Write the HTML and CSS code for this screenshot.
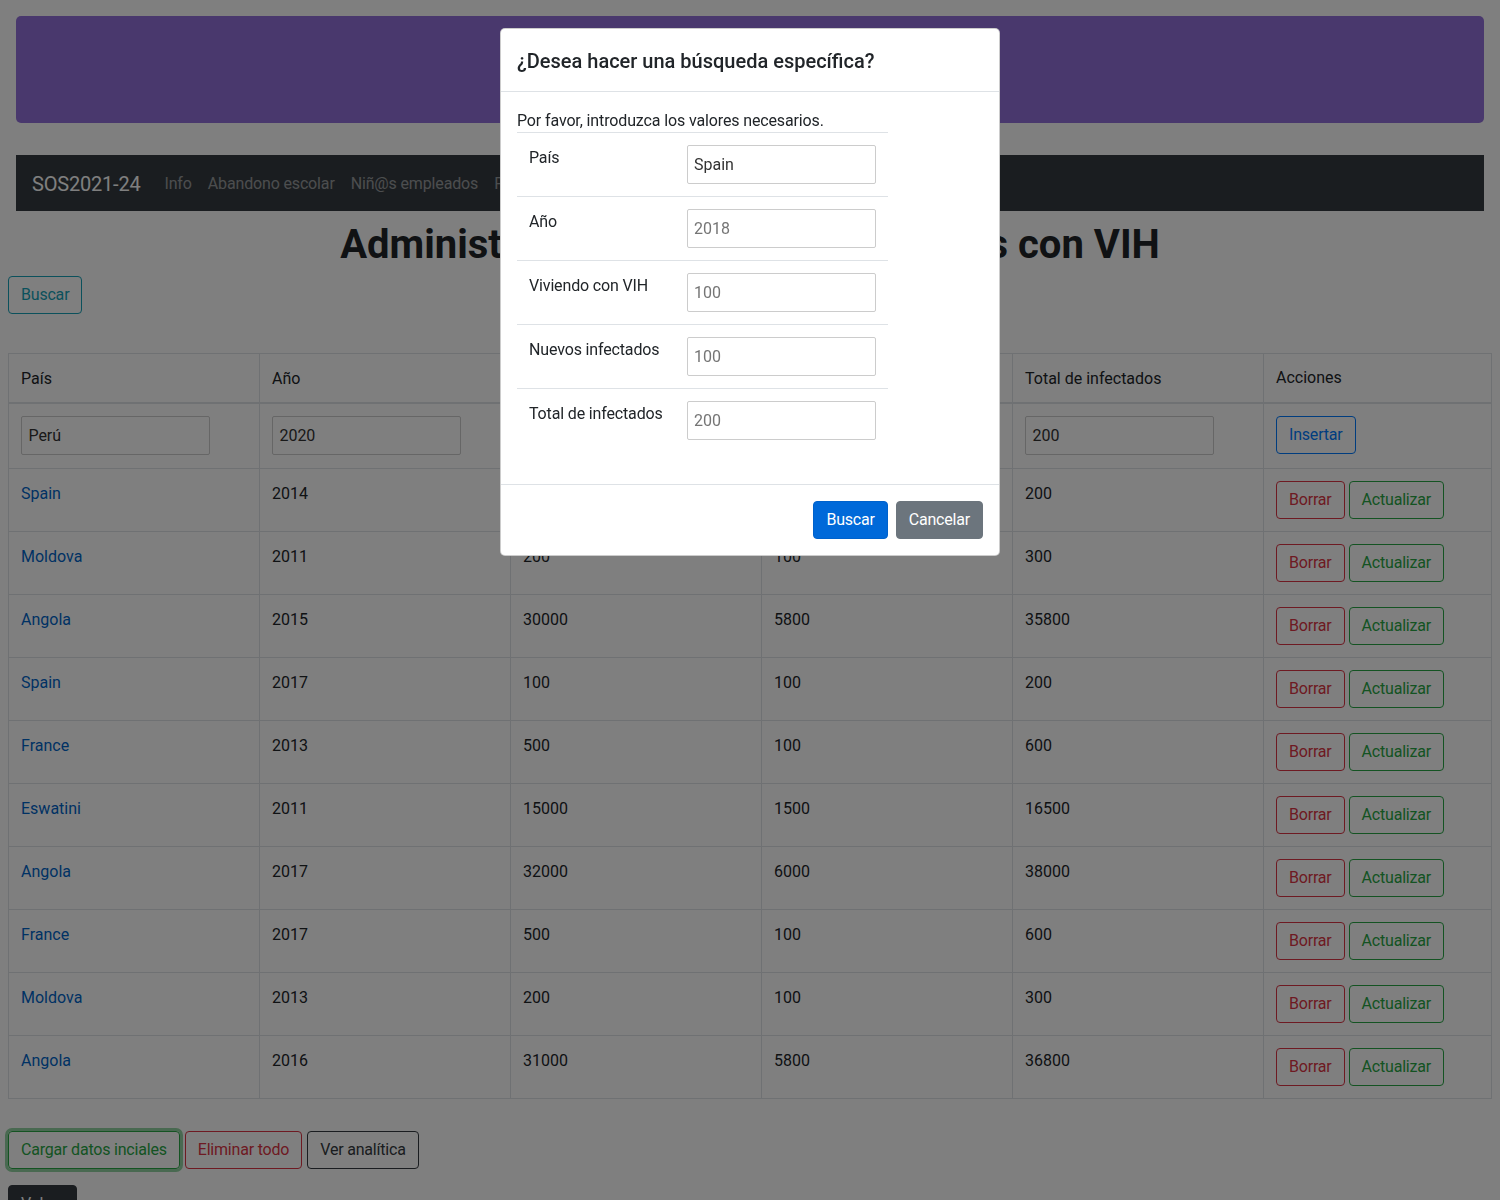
FILE: index.html
```html
<!DOCTYPE html>
<html lang="es">
<head>
<meta charset="utf-8">
<title>SOS2021-24</title>
<link rel="stylesheet" href="styles.css">
</head>
<body>
<main class="page">
  <div class="jumbotron"></div>
  <nav class="navbar">
    <span class="brand">SOS2021-24</span>
    <a class="nav-link">Info</a>
    <a class="nav-link">Abandono escolar</a>
    <a class="nav-link">Niñ@s empleados</a>
    <a class="nav-link">Personas con VIH</a>
  </nav>
  <h1 class="title">Administración de datos de personas con VIH</h1>
  <button class="btn btn-outline-info">Buscar</button>

  <table class="table">
    <colgroup>
      <col class="c"><col class="c"><col class="c"><col class="c"><col class="c"><col class="c-last">
    </colgroup>
    <thead>
      <tr><td>País</td><td>Año</td><td>Viviendo con VIH</td><td>Nuevos infectados</td><td>Total de infectados</td><td>Acciones</td></tr>
    </thead>
    <tbody>
      <tr class="input-row">
        <td><input class="inp" value="Perú"></td>
        <td><input class="inp" value="2020"></td>
        <td><input class="inp" value="100"></td>
        <td><input class="inp" value="100"></td>
        <td><input class="inp" value="200"></td>
        <td><button class="btn btn-outline-primary">Insertar</button></td>
      </tr>
      <tr><td><a class="link">Spain</a></td><td>2014</td><td>100</td><td>100</td><td>200</td><td><div class="acts"><button class="btn btn-outline-danger">Borrar</button><button class="btn btn-outline-success">Actualizar</button></div></td></tr>
      <tr><td><a class="link">Moldova</a></td><td>2011</td><td>200</td><td>100</td><td>300</td><td><div class="acts"><button class="btn btn-outline-danger">Borrar</button><button class="btn btn-outline-success">Actualizar</button></div></td></tr>
      <tr><td><a class="link">Angola</a></td><td>2015</td><td>30000</td><td>5800</td><td>35800</td><td><div class="acts"><button class="btn btn-outline-danger">Borrar</button><button class="btn btn-outline-success">Actualizar</button></div></td></tr>
      <tr><td><a class="link">Spain</a></td><td>2017</td><td>100</td><td>100</td><td>200</td><td><div class="acts"><button class="btn btn-outline-danger">Borrar</button><button class="btn btn-outline-success">Actualizar</button></div></td></tr>
      <tr><td><a class="link">France</a></td><td>2013</td><td>500</td><td>100</td><td>600</td><td><div class="acts"><button class="btn btn-outline-danger">Borrar</button><button class="btn btn-outline-success">Actualizar</button></div></td></tr>
      <tr><td><a class="link">Eswatini</a></td><td>2011</td><td>15000</td><td>1500</td><td>16500</td><td><div class="acts"><button class="btn btn-outline-danger">Borrar</button><button class="btn btn-outline-success">Actualizar</button></div></td></tr>
      <tr><td><a class="link">Angola</a></td><td>2017</td><td>32000</td><td>6000</td><td>38000</td><td><div class="acts"><button class="btn btn-outline-danger">Borrar</button><button class="btn btn-outline-success">Actualizar</button></div></td></tr>
      <tr><td><a class="link">France</a></td><td>2017</td><td>500</td><td>100</td><td>600</td><td><div class="acts"><button class="btn btn-outline-danger">Borrar</button><button class="btn btn-outline-success">Actualizar</button></div></td></tr>
      <tr><td><a class="link">Moldova</a></td><td>2013</td><td>200</td><td>100</td><td>300</td><td><div class="acts"><button class="btn btn-outline-danger">Borrar</button><button class="btn btn-outline-success">Actualizar</button></div></td></tr>
      <tr><td><a class="link">Angola</a></td><td>2016</td><td>31000</td><td>5800</td><td>36800</td><td><div class="acts"><button class="btn btn-outline-danger">Borrar</button><button class="btn btn-outline-success">Actualizar</button></div></td></tr>
    </tbody>
  </table>

  <div class="bottom-actions">
    <button class="btn btn-outline-success focused">Cargar datos inciales</button>
    <button class="btn btn-outline-danger">Eliminar todo</button>
    <button class="btn btn-outline-dark">Ver analítica</button>
  </div>
  <button class="btn btn-dark volver">Volver</button>
</main>

<div class="backdrop"></div>

<div class="modal">
  <div class="modal-content">
    <div class="modal-header">
      <h5 class="modal-title">¿Desea hacer una búsqueda específica?</h5>
    </div>
    <div class="modal-body">
      <p class="intro">Por favor, introduzca los valores necesarios.</p>
      <table class="mtable">
        <tr><td class="mlabel">País</td><td><input class="inp" value="Spain"></td></tr>
        <tr><td class="mlabel">Año</td><td><input class="inp" placeholder="2018"></td></tr>
        <tr><td class="mlabel">Viviendo con VIH</td><td><input class="inp" placeholder="100"></td></tr>
        <tr><td class="mlabel">Nuevos infectados</td><td><input class="inp" placeholder="100"></td></tr>
        <tr><td class="mlabel">Total de infectados</td><td><input class="inp" placeholder="200"></td></tr>
      </table>
    </div>
    <div class="modal-footer">
      <button class="btn btn-primary">Buscar</button>
      <button class="btn btn-secondary">Cancelar</button>
    </div>
  </div>
</div>
</body>
</html>
```

FILE: styles.css
```css
* { box-sizing: border-box; }
html, body { overflow: hidden; height: 100%; }
body {
  margin: 0;
  padding: 8px;
  background: #fff;
  color: #212529;
  font-family: Roboto, "Noto Sans", "Liberation Sans", sans-serif;
  font-size: 16px;
  line-height: 1.5;
}

.page { display: block; }

.jumbotron {
  margin: 8px 8px 32px;
  height: 107px;
  background: #9370db;
  border-radius: 5px;
}

.navbar {
  margin: 0 8px;
  background: #343a40;
  padding: 8px 16px;
  display: flex;
  align-items: center;
  height: 56px;
}
.brand {
  color: #fff;
  font-size: 20px;
  line-height: 30px;
  padding: 6px 0 4px;
  margin-right: 16px;
  letter-spacing: -0.2px;
}
.nav-link {
  color: rgba(255,255,255,.5);
  padding: 9px 8px 7px;
  line-height: 24px;
  letter-spacing: -0.15px;
}

.title {
  margin: 10px 0 7px;
  text-align: center;
  font-size: 40px;
  line-height: 48px;
  font-weight: 700;
}

.btn {
  display: inline-block;
  font-family: inherit;
  font-size: 16px;
  line-height: 24px;
  padding: 6px 12px;
  border: 1px solid transparent;
  border-radius: 4px;
  background: transparent;
  margin: 0;
  cursor: pointer;
  letter-spacing: -0.2px;
  white-space: nowrap;
}
.btn-outline-info { color: #17a2b8; border-color: #17a2b8; }
.btn-outline-primary { color: #007bff; border-color: #007bff; }
.btn-outline-danger { color: #dc3545; border-color: #dc3545; }
.btn-outline-success { color: #28a745; border-color: #28a745; }
.btn-outline-dark { color: #343a40; border-color: #343a40; }
.btn-dark { color: #fff; background: #343a40; border-color: #343a40; }
.btn-primary { color: #fff; background: #0069d9; border-color: #0062cc; }
.btn-secondary { color: #fff; background: #6c757d; border-color: #6c757d; }
.focused { box-shadow: 0 0 0 3px rgba(40,167,69,.5); }

.table {
  width: 100%;
  margin-top: 39px;
  margin-bottom: 16px;
  border-collapse: collapse;
  table-layout: fixed;
}
.table .c { width: 251px; }
.table td {
  border: 1px solid #dee2e6;
  padding: 13px 12px 11px;
  vertical-align: top;
  height: 63px;
}
.table thead td {
  border-bottom: 2px solid #dee2e6;
  height: auto;
}
.table .input-row td { height: 65px; padding-top: 12px; padding-bottom: 12px; }
.table td:last-child { padding-top: 12px; padding-bottom: 12px; }

.inp {
  display: block;
  width: 189px;
  height: 39px;
  padding: 6.4px;
  margin: 0;
  border: 1px solid #ccc;
  border-radius: 2px;
  font-family: inherit;
  font-size: 16px;
  color: #333;
  background: #fff;
}
.inp::placeholder { color: #757575; }

.link { color: rgb(0,100,200); text-decoration: none; }

.acts { display: flex; gap: 4px; }

.bottom-actions {
  display: flex;
  gap: 5px;
  margin-top: 32px;
}
.volver { margin-top: 16px; }

.backdrop {
  position: fixed;
  inset: 0;
  background: rgba(0,0,0,.5);
}

.modal {
  position: fixed;
  top: 28px;
  left: 500px;
  width: 500px;
}
.modal-content {
  background: #fff;
  border: 1px solid rgba(0,0,0,.2);
  border-radius: 5px;
}
.modal-header {
  padding: 17px 16px 15px;
  border-bottom: 1px solid #dee2e6;
}
.modal-title {
  margin: 0;
  font-size: 20px;
  font-weight: 500;
  line-height: 30px;
}
.modal-body { padding: 16px; }
.intro { margin: 0; padding-top: 1px; line-height: 23px; letter-spacing: -0.13px; }
.mtable {
  border-collapse: collapse;
  margin-bottom: 16px;
}
.mtable td {
  border-top: 1px solid #dee2e6;
  padding: 12px;
  vertical-align: top;
}
.mtable .mlabel {
  width: 157px;
  padding-top: 13px;
  letter-spacing: -0.15px;
  white-space: nowrap;
}
.modal-footer {
  border-top: 1px solid #dee2e6;
  padding: 12px;
  display: flex;
  justify-content: flex-end;
}
.modal-footer .btn { margin: 4px; }
```
